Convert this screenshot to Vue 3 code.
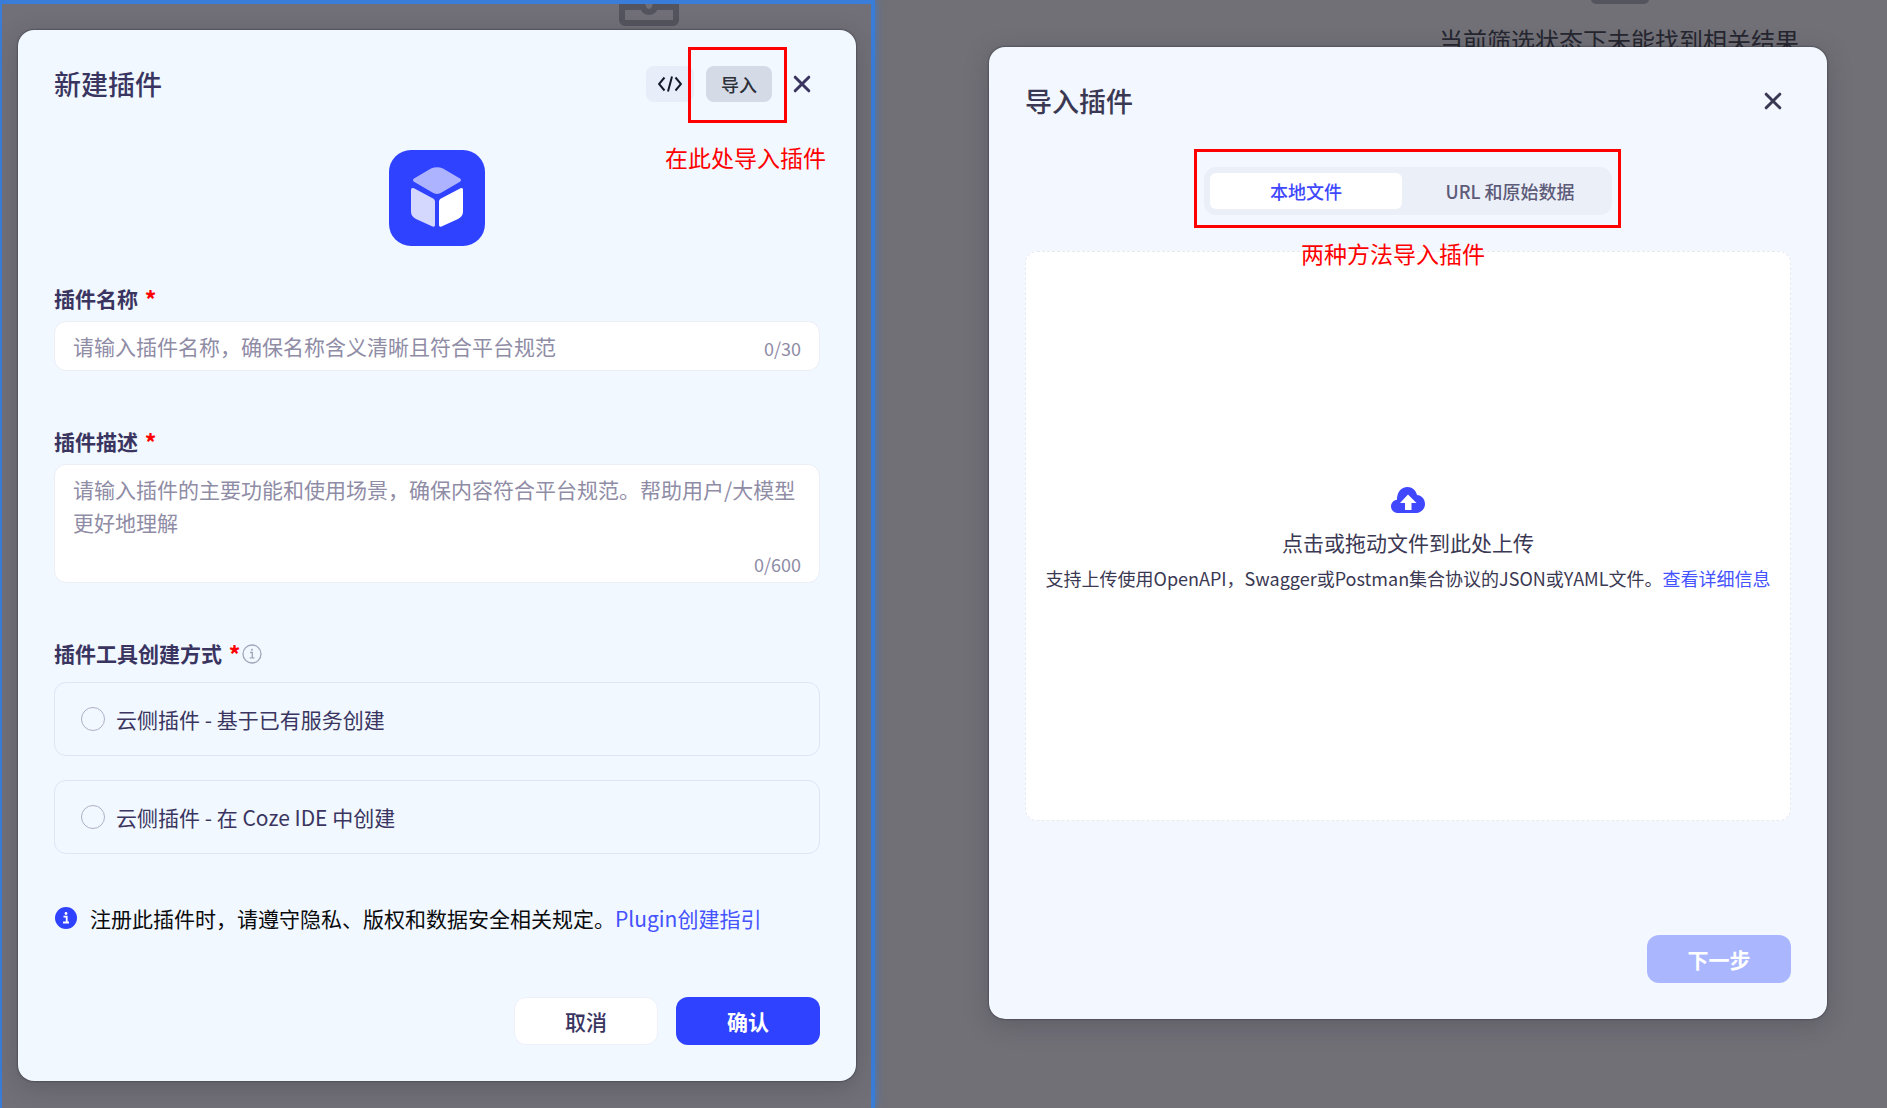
<script setup>
import { ref } from 'vue'

const pluginName = ref('')
const pluginDesc = ref('')
const createMode = ref('')
const modes = [
  { value: 'service', label: '云侧插件 - 基于已有服务创建' },
  { value: 'ide', label: '云侧插件 - 在 Coze IDE 中创建' },
]
</script>

<template>
  <main class="board">
    <section class="pane pane-create">
      <svg class="inbox" viewBox="0 0 60 50" aria-hidden="true">
        <rect x="3" y="3" width="54" height="44" rx="3" />
        <path d="M3 31h21c1 4 3 5 6 5s5-1 6-5h21" />
      </svg>
      <div class="dialog dialog-create" role="dialog" aria-labelledby="create-title">
        <header class="head">
          <h2 id="create-title" class="title">新建插件</h2>
          <div class="tools">
            <button type="button" class="tool tool-code" aria-label="代码">
              <svg width="24" height="18" viewBox="0 0 24 18" aria-hidden="true">
                <path d="M6.500 2.500L1 9l5.500 6.500M17.500 2.500L23 9l-5.500 6.500M14 1.500L10 16.500" />
              </svg>
            </button>
            <div class="marked">
              <button type="button" class="tool tool-import">导入</button>
              <span class="frame frame-import"></span>
              <span class="note note-import">在此处导入插件</span>
            </div>
            <button type="button" class="close" aria-label="关闭">
              <svg width="18" height="18" viewBox="0 0 18 18" aria-hidden="true"><path d="M2.200 2.200l13.600 13.600M15.800 2.200L2.200 15.800" /></svg>
            </button>
          </div>
        </header>

        <svg class="logo" viewBox="0 0 96 96" aria-hidden="true">
          <rect width="96" height="96" rx="22" fill="#2f42ff" />
          <path d="M42 18.500Q48 16 54 18.500L71 28.500Q73 30 71 31.800L53 42.300Q48 45.500 43 42.300L25 31.800Q23 30 25 28.500Z" fill="#adb3ff" />
          <path d="M25 38.300L44.500 48.700Q46 49.600 46 51.500V75Q46 77.400 43.500 76.500L27 69Q22 66.500 22 61.500V40Q22 37 25 38.300Z" fill="#d4d8ff" />
          <path d="M71.500 38.300L51.500 48.700Q50 49.600 50 51.500V75Q50 77.400 52.500 76.500L69 69Q74 66.500 74 61.500V40Q74 37 71.500 38.300Z" fill="#fff" />
        </svg>

        <form class="form" @submit.prevent>
          <div class="field">
            <label class="label" for="plugin-name">插件名称<b class="star">*</b></label>
            <div class="control">
              <input id="plugin-name" v-model="pluginName" type="text" maxlength="30" placeholder="请输入插件名称，确保名称含义清晰且符合平台规范" />
              <span class="count">{{ pluginName.length }}/30</span>
            </div>
          </div>
          <div class="field">
            <label class="label" for="plugin-desc">插件描述<b class="star">*</b></label>
            <div class="control control-area">
              <textarea id="plugin-desc" v-model="pluginDesc" maxlength="600" placeholder="请输入插件的主要功能和使用场景，确保内容符合平台规范。帮助用户/大模型更好地理解"></textarea>
              <span class="count">{{ pluginDesc.length }}/600</span>
            </div>
          </div>
          <fieldset class="modes">
            <legend class="label">插件工具创建方式<b class="star">*</b>
              <svg class="hint" width="20" height="20" viewBox="0 0 20 20" aria-hidden="true">
                <circle cx="10" cy="10" r="9" fill="none" stroke="#a3a5b8" stroke-width="1.300" />
                <path d="M8 8.500h2.300v5.200M7.800 13.900h4.600" fill="none" stroke="#a3a5b8" stroke-width="1.300" />
                <circle cx="10" cy="5.800" r="1" fill="#a3a5b8" />
              </svg>
            </legend>
            <label v-for="mode in modes" :key="mode.value" class="mode">
              <input v-model="createMode" type="radio" name="mode" :value="mode.value" />
              <span>{{ mode.label }}</span>
            </label>
          </fieldset>
        </form>

        <p class="notice">
          <svg width="22" height="22" viewBox="0 0 22 22" aria-hidden="true">
            <circle cx="11" cy="11" r="11" fill="#2f42ff" />
            <circle cx="11" cy="6.500" r="1.400" fill="#fff" />
            <path d="M8.500 9.700h3.200v5.500M8 15.500h6" fill="none" stroke="#fff" stroke-width="1.800" />
          </svg>
          <span>注册此插件时，请遵守隐私、版权和数据安全相关规定。<a href="#guide">Plugin创建指引</a></span>
        </p>

        <footer class="foot">
          <button type="button" class="btn btn-plain">取消</button>
          <button type="button" class="btn btn-primary">确认</button>
        </footer>
      </div>
    </section>

    <section class="pane pane-import">
      <span class="inbox-edge"></span>
      <p class="empty-text">当前筛选状态下未能找到相关结果</p>
      <div class="dialog dialog-import" role="dialog" aria-labelledby="import-title">
        <header class="head">
          <h2 id="import-title" class="title">导入插件</h2>
          <button type="button" class="close" aria-label="关闭">
            <svg width="18" height="18" viewBox="0 0 18 18" aria-hidden="true"><path d="M2.200 2.200l13.600 13.600M15.800 2.200L2.200 15.800" /></svg>
          </button>
        </header>
        <div class="tabs" role="tablist">
          <button type="button" class="tab tab-active" role="tab" aria-selected="true">本地文件</button>
          <button type="button" class="tab" role="tab" aria-selected="false">URL 和原始数据</button>
          <span class="frame frame-tabs"></span>
          <span class="note note-tabs">两种方法导入插件</span>
        </div>
        <div class="drop">
          <svg width="34" height="26" viewBox="0 0 34 26" aria-hidden="true">
            <path d="M7 26C3 26 0 23 0 19.500C0 16 2.500 13.200 6 12.800C5.800 5.500 10 0 16.500 0C21 0 25 3 26 8C30.500 8.300 34 12 34 17C34 22 30 26 25 26Z" fill="#4048ff" />
            <path d="M17 7.500L25.500 16H20.500V23H14V16H9Z" fill="#fff" />
          </svg>
          <p class="drop-main">点击或拖动文件到此处上传</p>
          <p class="drop-sub">支持上传使用OpenAPI，Swagger或Postman集合协议的JSON或YAML文件。<a href="#detail">查看详细信息</a></p>
        </div>
        <footer class="foot">
          <button type="button" class="btn btn-primary" disabled>下一步</button>
        </footer>
      </div>
    </section>
  </main>
</template>

<style>
body {
  margin: 0;
  background: #717077;
}
</style>

<style scoped>
* {
  box-sizing: border-box;
}
.board {
  display: grid;
  grid-template-columns: 875fr 1012fr;
  min-height: 100vh;
  overflow: hidden;
  font-family: "Noto Sans CJK SC", sans-serif;
  font-size: 21px;
  line-height: 32px;
  color: #3a3560;
}
button,
input,
textarea {
  margin: 0;
  border: 0;
  font: inherit;
  color: inherit;
}
button {
  padding: 0;
  cursor: pointer;
}
p,
h2 {
  margin: 0;
}
a {
  color: #4452ff;
  text-decoration: none;
}
.pane {
  position: relative;
}
.pane-create {
  z-index: 1;
  padding: 26px 15px 27px 16px;
  border: solid #3a7dd8;
  border-width: 4px 4px 0 2px;
  box-shadow: 0 0 8px #3a7dd8;
  background: #717078;
}
.pane-import {
  padding: 47px 60px 89px 114px;
}
.inbox {
  position: absolute;
  top: -28px;
  left: 617px;
  width: 60px;
  height: 50px;
  fill: none;
  stroke: #54545e;
  stroke-width: 6;
  clip-path: inset(28px 0 0 0);
}
.inbox-edge {
  position: absolute;
  top: -16px;
  left: 716px;
  width: 58px;
  height: 20px;
  border-radius: 5px;
  background: #54555c;
}
.empty-text {
  position: absolute;
  top: 24px;
  left: 564px;
  font-size: 24px;
  white-space: nowrap;
  color: #25262f;
}
.dialog {
  position: relative;
  display: flex;
  flex-direction: column;
  padding: 36px;
  border-radius: 16px;
  box-shadow: 0 0 2px rgba(30, 30, 40, 0.9), 0 6px 24px rgba(40, 40, 50, 0.25);
}
.dialog-create {
  background: #f1f8ff;
}
.dialog-import {
  background: #f3f7ff;
  color: #3a3852;
}
.head,
.tools {
  display: flex;
  align-items: center;
}
.head {
  justify-content: space-between;
  height: 36px;
}
.title {
  font-size: 27px;
  font-weight: 500;
}
.tools {
  gap: 12px;
}
.tool {
  display: flex;
  align-items: center;
  justify-content: center;
  height: 36px;
  border-radius: 8px;
}
.tool-code {
  width: 48px;
  background: #e7edf9;
}
.tool-code svg {
  fill: none;
  stroke: #15182a;
  stroke-width: 2;
}
.marked {
  position: relative;
}
.tool-import {
  width: 66px;
  background: #d4dae6;
  color: #2c3038;
  font-size: 18px;
  font-weight: 500;
}
.close {
  display: flex;
  align-items: center;
  justify-content: center;
  width: 36px;
  height: 36px;
  background: none;
}
.close svg {
  fill: none;
  stroke: currentColor;
  stroke-width: 3;
  stroke-linecap: round;
}
.frame {
  position: absolute;
  border: 3px solid #f00;
  pointer-events: none;
}
.frame-import {
  inset: -19px -15px -21px -18px;
}
.frame-tabs {
  inset: -18px -9px -13px -10px;
}
.note {
  position: absolute;
  color: #f00;
  font-size: 23px;
  white-space: nowrap;
  pointer-events: none;
}
.note-import {
  top: 75px;
  left: -41px;
}
.note-tabs {
  top: 70px;
  left: 97px;
}
.logo {
  align-self: center;
  width: 96px;
  height: 96px;
  margin-top: 48px;
}
.form {
  display: flex;
  flex-direction: column;
  gap: 54px;
  margin-top: 36px;
}
.label {
  display: block;
  padding: 0;
  font-weight: 600;
}
.star {
  margin-left: 7px;
  color: #f00;
}
.control {
  position: relative;
  display: flex;
  align-items: center;
  gap: 12px;
  height: 50px;
  margin-top: 7px;
  padding: 0 18px;
  border: 1px solid #eceef6;
  border-radius: 12px;
  background: #fff;
}
.control input {
  flex: 1;
  min-width: 0;
  padding: 0;
  outline: 0;
  background: none;
}
.control-area {
  height: 119px;
  padding: 8px 18px;
}
.control-area textarea {
  width: 100%;
  height: 100%;
  padding: 0;
  outline: 0;
  resize: none;
  background: none;
  line-height: 33px;
}
.control ::placeholder {
  color: #8f8ca6;
  opacity: 1;
}
.count {
  padding-top: 3px;
  color: #8f8ca6;
  font-size: 18px;
}
.control-area .count {
  position: absolute;
  right: 18px;
  bottom: 2px;
}
.modes {
  display: flex;
  flex-direction: column;
  gap: 24px;
  min-width: 0;
  margin: 0;
  padding: 0;
  border: 0;
}
.modes .label {
  margin-bottom: 13px;
}
.hint {
  margin-left: 2px;
  vertical-align: -2px;
}
.mode {
  display: flex;
  align-items: center;
  gap: 11px;
  height: 74px;
  padding: 0 26px;
  border: 1px solid #dfe5f3;
  border-radius: 12px;
}
.mode input {
  appearance: none;
  width: 24px;
  height: 24px;
  border: 1px solid #b0aec6;
  border-radius: 50%;
}
.mode input:checked {
  border: 7px solid #2f42ff;
}
.notice {
  display: flex;
  align-items: center;
  gap: 13px;
  margin-top: 48px;
  padding-left: 1px;
  color: #0a0a0c;
}
.foot {
  display: flex;
  justify-content: flex-end;
  gap: 18px;
}
.dialog-create .foot {
  margin-top: 63px;
}
.dialog-import .foot {
  margin-top: 114px;
}
.btn {
  width: 144px;
  height: 48px;
  border-radius: 12px;
  font-weight: 500;
}
.btn-plain {
  border: 1px solid #eef1fb;
  background: #fff;
}
.btn-primary {
  background: #2f42ff;
  color: #fff;
  font-weight: 700;
}
.btn-primary:disabled {
  background: #aab7ff;
}
.tabs {
  position: relative;
  display: flex;
  align-self: center;
  gap: 12px;
  margin-top: 48px;
  padding: 6px;
  border-radius: 12px;
  background: #ebeff8;
}
.tab {
  width: 192px;
  height: 36px;
  border-radius: 6px;
  background: none;
  color: #5d5b78;
  font-size: 18px;
  font-weight: 500;
}
.tab-active {
  background: #fff;
  color: #4048ff;
}
.drop {
  display: flex;
  flex-direction: column;
  align-items: center;
  justify-content: center;
  height: 570px;
  margin-top: 36px;
  padding-top: 8px;
  border: 1px dashed #e8eaf0;
  border-radius: 12px;
  background: #fff;
}
.drop-main {
  margin-top: 13px;
}
.drop-sub {
  margin-top: 4px;
  font-size: 18px;
  white-space: nowrap;
}
</style>
